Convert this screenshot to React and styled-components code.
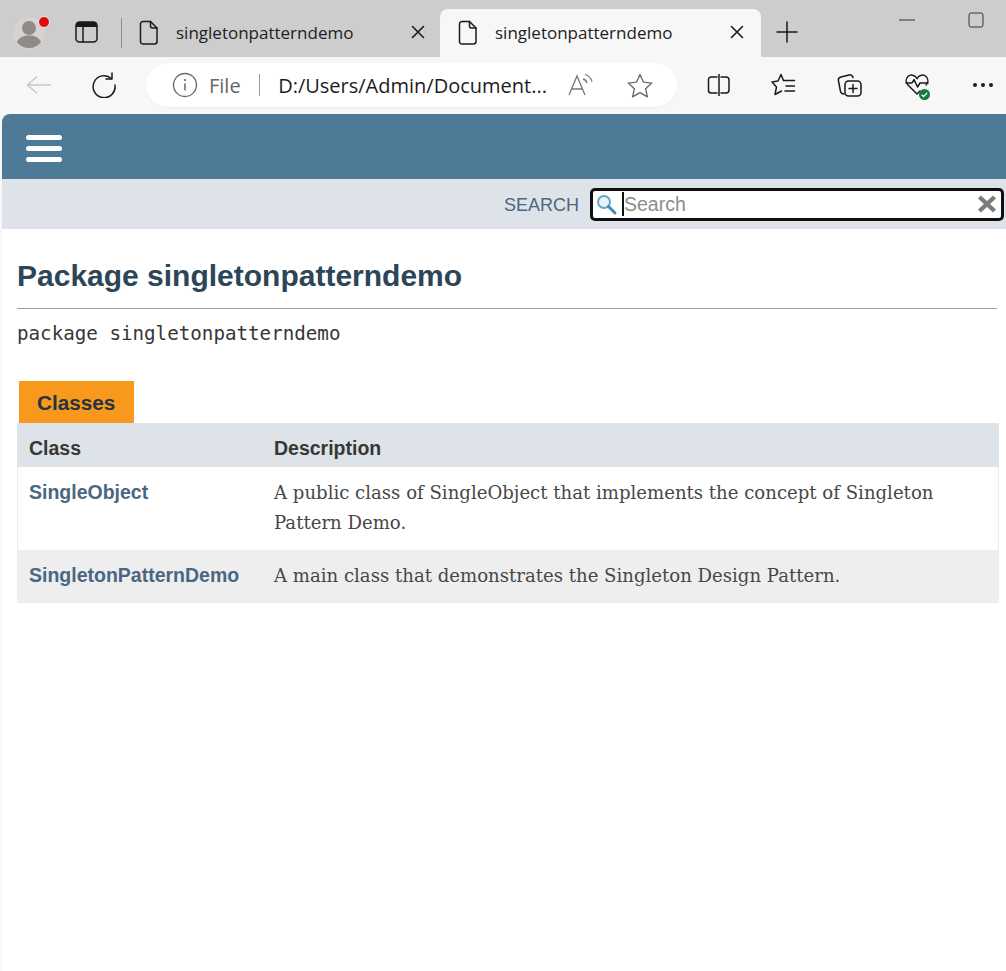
import { createGlobalStyle, styled } from "styled-components";

const GlobalStyle = createGlobalStyle`
  html, body {
    margin: 0;
    padding: 0;
    height: 100%;
    overflow: hidden;
    background: #f7f7f7;
  }
`;

const stroke = { fill: "none", stroke: "#1a1a1a", strokeWidth: 1.5, strokeLinecap: "round", strokeLinejoin: "round" };

function PageIcon() {
  return (
    <svg width="20" height="25" viewBox="0 0 20 25">
      <path d="M4 1.5h7.5L18 8v13.5a2.5 2.5 0 0 1-2.5 2.5h-11A2.5 2.5 0 0 1 1.5 21.500V4A2.500 2.500 0 0 1 4 1.500z" {...stroke} />
      <path d="M11.500 1.500V6a2 2 0 0 0 2 2H18" {...stroke} />
    </svg>
  );
}

function CloseIcon() {
  return (
    <svg width="14" height="14" viewBox="0 0 14 14">
      <path d="M1.500 1.500l11 11M12.500 1.500l-11 11" {...stroke} strokeWidth="1.600" />
    </svg>
  );
}

function Avatar() {
  return (
    <AvatarWrap>
      <svg width="38" height="38" viewBox="0 0 38 38">
        <circle cx="17" cy="18" r="16" fill="#d6d3d1" />
        <circle cx="17" cy="13" r="7" fill="#8f8b88" />
        <path d="M5 27c2-5 7-6.500 12-6.500S27 22 29 27c-3 4-7 6-12 6S8 31 5 27z" fill="#8f8b88" />
      </svg>
      <AvatarDot />
    </AvatarWrap>
  );
}

export default function App() {
  return (
    <>
      <GlobalStyle />
      <Browser>
        <TabStrip>
          <Avatar />
          <StripIcon $width={25}>
            <svg width="23" height="22" viewBox="0 0 23 22">
              <rect x="1" y="1" width="21" height="20" rx="3.500" {...stroke} />
              <path d="M1 3.500a2.500 2.500 0 0 1 2.500-2.500h16a2.500 2.500 0 0 1 2.500 2.500V6H1z" fill="#1a1a1a" />
              <path d="M8 6v15" {...stroke} />
            </svg>
          </StripIcon>
          <TabDivider />
          <Tab>
            <PageIcon />
            <TabTitle>singletonpatterndemo</TabTitle>
            <CloseIcon />
          </Tab>
          <Tab $active>
            <PageIcon />
            <TabTitle>singletonpatterndemo</TabTitle>
            <CloseIcon />
          </Tab>
          <NewTab>
            <svg width="22" height="22" viewBox="0 0 22 22">
              <path d="M11 1v20M1 11h20" {...stroke} />
            </svg>
          </NewTab>
          <WindowControls>
            <svg width="16" height="2" viewBox="0 0 16 2">
              <path d="M0 1h16" stroke="#333" strokeWidth="1" />
            </svg>
            <svg width="16" height="16" viewBox="0 0 16 16">
              <rect x="1" y="1" width="14" height="14" rx="2" fill="none" stroke="#333" strokeWidth="1" />
            </svg>
          </WindowControls>
        </TabStrip>

        <Toolbar>
          <ToolButton $width={28}>
            <svg width="26" height="20" viewBox="0 0 26 20">
              <path d="M25 10H2M11 1.500L1.500 10l9.500 8.500" fill="none" stroke="#c9c9c9" strokeWidth="1.500" />
            </svg>
          </ToolButton>
          <ToolButton $width={28} $left={37}>
            <svg width="26" height="26" viewBox="0 0 26 26">
              <path d="M20.500 6.500A11 11 0 1 0 24 13" {...stroke} />
              <path d="M21 1v6h-6" {...stroke} />
            </svg>
          </ToolButton>
          <AddressBar>
            <svg width="26" height="26" viewBox="0 0 26 26">
              <circle cx="13" cy="13" r="11.500" fill="none" stroke="#666" strokeWidth="1.300" />
              <path d="M13 11.500v7" stroke="#666" strokeWidth="1.500" />
              <circle cx="13" cy="8" r="1.100" fill="#666" />
            </svg>
            <FileLabel>File</FileLabel>
            <AddressDivider />
            <Url>D:/Users/Admin/Document...</Url>
            <ReadAloud>
              <svg width="26" height="24" viewBox="0 0 26 24">
                <path d="M1 22L9 3l8 19M4 16h10" fill="none" stroke="#777" strokeWidth="1.300" />
                <path d="M15 6c2 .5 3.500 2 4 4M17 1.500c3.500 1 6 3.500 7 7" fill="none" stroke="#777" strokeWidth="1.300" />
              </svg>
            </ReadAloud>
            <svg width="26" height="25" viewBox="0 0 26 25">
              <path d="M13 1.500l3.500 7.700 8.300.9-6.200 5.600 1.800 8.200-7.400-4.300-7.400 4.300 1.800-8.200-6.200-5.600 8.300-.9z" fill="none" stroke="#666" strokeWidth="1.300" strokeLinejoin="round" />
            </svg>
          </AddressBar>
          <ToolIcons>
            <svg width="24" height="22" viewBox="0 0 24 22">
              <path d="M10 3H4a2.500 2.500 0 0 0-2.500 2.500v11A2.500 2.500 0 0 0 4 19h6M14 3h5a3 3 0 0 1 3 3v10a3 3 0 0 1-3 3h-5M12 0v22" {...stroke} />
            </svg>
            <svg width="26" height="24" viewBox="0 0 26 24">
              <path d="M12.500 7.500L10 1.500 7 8 1 9l4.500 5L4 21.500 10.500 18" {...stroke} />
              <path d="M12.500 7.500h11M15 13h8.500M14 18h9.500" {...stroke} />
            </svg>
            <svg width="26" height="24" viewBox="0 0 26 24">
              <path d="M7 21c-2 0-3-1-3.500-2.500L1.500 8C1 6 2 4.500 4 4l8-2c2-.5 3.500.5 4 2.500" {...stroke} />
              <rect x="8" y="8" width="16" height="15" rx="3.500" {...stroke} />
              <path d="M16 11.500v8M12 15.500h8" {...stroke} />
            </svg>
            <HealthIcon>
              <svg width="25" height="25" viewBox="0 0 25 25">
                <path d="M12 5.500C10 2 5.500 1 3 3.500S.5 9.500 3 12l9 9 3-3" {...stroke} />
                <path d="M12 5.500c2-3.500 6.500-4.500 9-2S23.500 9.500 21 12" {...stroke} />
                <path d="M1 10h6l2-3.500 3.500 7.500 2.500-4h8" {...stroke} />
              </svg>
              <HealthBadge>
                <svg width="11" height="11" viewBox="0 0 12 12">
                  <circle cx="6" cy="6" r="6" fill="#107c41" />
                  <path d="M3 6.200l2 2 4-4" fill="none" stroke="#fff" strokeWidth="1.400" />
                </svg>
              </HealthBadge>
            </HealthIcon>
            <Dots>
              <Dot />
              <Dot />
              <Dot />
            </Dots>
          </ToolIcons>
        </Toolbar>

        <Viewport>
          <TopNav>
            <MenuBars>
              <MenuBar />
              <MenuBar />
              <MenuBar />
            </MenuBars>
          </TopNav>
          <SubNav>
            <SearchLabel>SEARCH</SearchLabel>
            <SearchBox>
              <svg width="24" height="24" viewBox="0 0 24 24">
                <circle cx="10" cy="10" r="6" fill="#e8f2f8" stroke="#6ba5c9" strokeWidth="2" />
                <path d="M14.500 14.500L21 21" stroke="#3d8db5" strokeWidth="3" strokeLinecap="round" />
              </svg>
              <Caret />
              <Placeholder>Search</Placeholder>
              <SearchClear>
                <svg width="20" height="18" viewBox="0 0 20 18">
                  <path d="M2.500 2l15 14M17.500 2l-15 14" stroke="#7c7c7c" strokeWidth="4.400" />
                </svg>
              </SearchClear>
            </SearchBox>
          </SubNav>

          <Main>
            <Title>Package singletonpatterndemo</Title>
            <Rule />
            <Declaration>package singletonpatterndemo</Declaration>
            <TabLabel>Classes</TabLabel>
            <Table>
              <HeadRow>
                <Cell>Class</Cell>
                <Cell>Description</Cell>
              </HeadRow>
              <Row>
                <NameCell>SingleObject</NameCell>
                <DescCell>A public class of SingleObject that implements the concept of Singleton Pattern Demo.</DescCell>
              </Row>
              <Row $alt>
                <NameCell>SingletonPatternDemo</NameCell>
                <DescCell>A main class that demonstrates the Singleton Design Pattern.</DescCell>
              </Row>
            </Table>
          </Main>
        </Viewport>
      </Browser>
    </>
  );
}

const Browser = styled.div`
  width: 1006px;
  height: 971px;
  display: flex;
  flex-direction: column;
  overflow: hidden;
  background: #f7f7f7;
`;

const TabStrip = styled.div`
  height: 57px;
  box-sizing: border-box;
  padding: 9px 0 0 12px;
  background: #cdcdcd;
  display: flex;
  align-items: stretch;
  flex-shrink: 0;
`;

const AvatarWrap = styled.div`
  position: relative;
  width: 38px;
  height: 38px;
  margin-top: 6px;
`;

const AvatarDot = styled.span`
  position: absolute;
  top: 1px;
  left: 26px;
  width: 10px;
  height: 10px;
  border-radius: 50%;
  background: #e00b0b;
  border: 1px solid #eee;
`;

const StripIcon = styled.div`
  width: ${(p) => p.$width}px;
  margin-left: 25px;
  display: flex;
  align-items: center;
  padding-bottom: 2px;
`;

const TabDivider = styled.div`
  width: 1px;
  height: 30px;
  margin: 9px 0 0 21px;
  background: #8e8e8e;
`;

const Tab = styled.div`
  width: ${(p) => (p.$active ? "321px" : "318px")};
  box-sizing: border-box;
  padding: 0 ${(p) => (p.$active ? "17px" : "15px")} 2px ${(p) => (p.$active ? "18px" : "17px")};
  display: flex;
  align-items: center;
  background: ${(p) => (p.$active ? "#f7f7f7" : "transparent")};
  border-radius: 8px 8px 0 0;
`;

const TabTitle = styled.span`
  flex: 1;
  margin-left: 17px;
  font-family: "Open Sans", sans-serif;
  font-size: 17px;
  color: #222;
`;

const NewTab = styled.div`
  margin-left: 15px;
  display: flex;
  align-items: center;
  padding-bottom: 3px;
`;

const WindowControls = styled.div`
  margin-left: 101px;
  display: flex;
  align-items: center;
  gap: 53px;
  height: 22px;
  margin-top: 0;
`;

const Toolbar = styled.div`
  height: 57px;
  box-sizing: border-box;
  padding: 6px 0 7px 25px;
  display: flex;
  align-items: center;
  flex-shrink: 0;
  background: #f7f7f7;
`;

const ToolButton = styled.div`
  width: ${(p) => p.$width}px;
  margin-left: ${(p) => p.$left || 0}px;
  display: flex;
  justify-content: center;
`;

const AddressBar = styled.div`
  width: 531px;
  height: 44px;
  margin-left: 28px;
  box-sizing: border-box;
  padding: 0 24px 0 26px;
  display: flex;
  align-items: center;
  background: #fff;
  border-radius: 22px;
  box-shadow: 0 1px 2px rgba(0, 0, 0, 0.04);
`;

const FileLabel = styled.span`
  margin-left: 11px;
  font-family: "Open Sans", sans-serif;
  font-size: 20px;
  color: #666;
`;

const AddressDivider = styled.span`
  width: 1.500px;
  height: 22px;
  margin-left: 18px;
  background: #999;
`;

const Url = styled.span`
  margin-left: 18px;
  width: 290px;
  font-family: "Open Sans", sans-serif;
  font-size: 20px;
  color: #1c1c1c;
  white-space: nowrap;
`;

const ReadAloud = styled.span`
  display: flex;
  margin-right: 33px;
`;

const ToolIcons = styled.div`
  margin-left: 30px;
  display: flex;
  align-items: center;
  gap: 40px;
`;

const HealthIcon = styled.div`
  position: relative;
  display: flex;
  margin-left: 2px;
`;

const HealthBadge = styled.span`
  position: absolute;
  right: 0;
  bottom: -2px;
  display: flex;
`;

const Dots = styled.div`
  display: flex;
  gap: 4px;
  margin-left: 3px;
`;

const Dot = styled.span`
  width: 4px;
  height: 4px;
  border-radius: 50%;
  background: #1a1a1a;
`;

const Viewport = styled.div`
  flex: 1;
  margin-left: 2px;
  display: flex;
  flex-direction: column;
  background: #fff;
  border-radius: 8px 0 0 0;
  overflow: hidden;
`;

const TopNav = styled.div`
  height: 65px;
  box-sizing: border-box;
  padding: 3px 0 0 24px;
  background: #4d7a97;
  display: flex;
  align-items: center;
  flex-shrink: 0;
`;

const MenuBars = styled.div`
  display: flex;
  flex-direction: column;
  gap: 6px;
`;

const MenuBar = styled.span`
  width: 36px;
  height: 5px;
  border-radius: 3px;
  background: #fff;
`;

const SubNav = styled.div`
  height: 50px;
  background: #dee3e9;
  display: flex;
  align-items: center;
  justify-content: flex-end;
  flex-shrink: 0;
`;

const SearchLabel = styled.span`
  padding-top: 2px;
  font-family: "Liberation Sans", Arial, sans-serif;
  font-size: 18px;
  color: #4a6782;
  margin-right: 11px;
`;

const SearchBox = styled.div`
  width: 414px;
  height: 33px;
  margin-right: 2px;
  box-sizing: border-box;
  border: 3px solid #101010;
  border-radius: 5px;
  background: #fff;
  display: flex;
  align-items: center;
  padding: 0 4px 0 1px;
`;

const Caret = styled.span`
  width: 2px;
  height: 24px;
  margin-left: 4px;
  background: #111;
`;

const Placeholder = styled.span`
  flex: 1;
  font-family: "Liberation Sans", Arial, sans-serif;
  font-size: 19.500px;
  color: #8c8c8c;
`;

const SearchClear = styled.span`
  display: flex;
`;

const Main = styled.div`
  padding: 0 7px 0 15px;
  flex: 1;
`;

const Title = styled.h1`
  margin: 28px 0 0;
  height: 37px;
  line-height: 37px;
  font-family: "Liberation Sans", Arial, sans-serif;
  font-size: 30px;
  font-weight: 700;
  color: #2c4557;
`;

const Rule = styled.div`
  height: 1px;
  margin-top: 14px;
  margin-right: 2px;
  background: #a0a0a0;
`;

const Declaration = styled.div`
  margin-top: 14px;
  height: 22px;
  line-height: 22px;
  font-family: "DejaVu Sans Mono", monospace;
  font-size: 19.200px;
  color: #353833;
`;

const TabLabel = styled.div`
  width: 115px;
  height: 42px;
  margin: 36px 0 0 2px;
  box-sizing: border-box;
  padding-left: 18px;
  line-height: 44px;
  background: #f8981d;
  font-family: "Liberation Sans", Arial, sans-serif;
  font-size: 20.700px;
  font-weight: 700;
  color: #253441;
`;

const Table = styled.div`
  width: 982px;
  display: flex;
  flex-direction: column;
`;

const HeadRow = styled.div`
  height: 44px;
  box-sizing: border-box;
  padding: 6px 0 0 12px;
  display: grid;
  grid-template-columns: 245px 1fr;
  align-items: center;
  background: #dee3e9;
`;

const Row = styled.div`
  display: grid;
  grid-template-columns: 245px 1fr;
  background: ${(p) => (p.$alt ? "#eeeeef" : "#fff")};
  padding: 11px 0 12px 12px;
  box-shadow: inset -1px 0 0 #eeeeef, inset 1px 0 0 #eeeeef;
`;

const Cell = styled.div`
  font-family: "Liberation Sans", Arial, sans-serif;
  font-size: 19.500px;
  font-weight: 700;
  color: #353833;
`;

const NameCell = styled.div`
  font-family: "Liberation Sans", Arial, sans-serif;
  font-size: 19.500px;
  font-weight: 700;
  line-height: 28px;
  color: #4a6782;
`;

const DescCell = styled.div`
  padding-right: 50px;
  font-family: "DejaVu Serif", serif;
  font-size: 18.100px;
  line-height: 30px;
  color: #474747;
`;
